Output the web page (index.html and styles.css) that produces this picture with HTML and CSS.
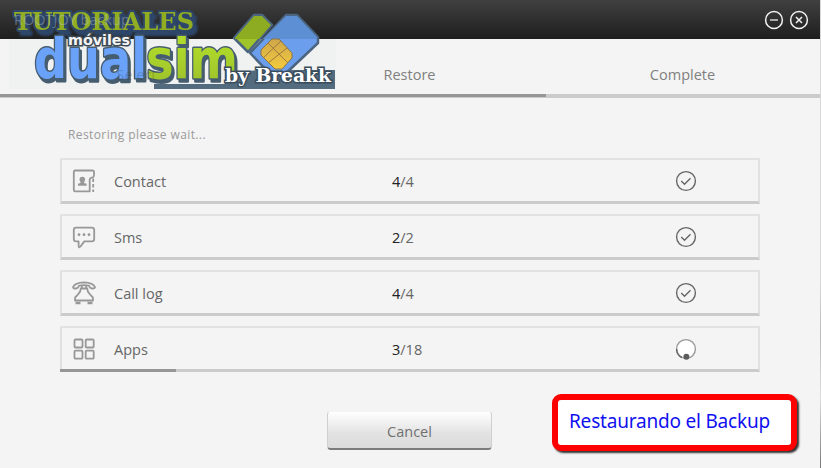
FILE: index.html
```html
<!DOCTYPE html>
<html>
<head>
<meta charset="utf-8">
<title>ROOTJOY backup</title>
<link rel="stylesheet" href="styles.css">
</head>
<body>
<div class="window">
    <div class="titlebar">
        <span class="title">ROOTJOY backup</span>
        <svg class="winbtn" width="20" height="20" viewBox="0 0 20 20">
            <circle cx="10" cy="10" r="8.4"/>
            <path class="dim" d="M6 10h8"/>
        </svg>
        <svg class="winbtn" width="20" height="20" viewBox="0 0 20 20">
            <circle cx="10" cy="10" r="8.4"/>
            <path d="M7 7l6 6M13 7l-6 6"/>
        </svg>
    </div>
    <div class="steps">
        <div class="step">Select</div>
        <div class="step">Restore</div>
        <div class="step">Complete</div>
    </div>
    <div class="stepbar"><div class="stepbar-done"></div></div>

    <div class="content">
        <p class="status">Restoring please wait...</p>
        <div class="item">
            <svg class="icon" width="24" height="24" viewBox="0 0 24 24">
                <path d="M20.5 1.5H3.2Q1.8 1.5 1.8 3V20.5Q1.8 22.3 3.3 22.3H17.7V10.5Q17.7 9 19.2 8.8L20.7 8.3Q22 7.8 22 6.5V3Q22 1.5 20.5 1.5Z"/>
                <path d="M21.2 9.5v3.5M21.2 15v3.5M21.2 20.5v2.5"/>
                <path class="fill" d="M10.3 7.7a2.8 2.8 0 0 1 2.8 2.8q0 1.5-1 2.5v1l2.5.7v2H6v-2l2.5-.7v-1q-1-1-1-2.5a2.8 2.8 0 0 1 2.8-2.8z"/>
            </svg>
            <span class="name">Contact</span>
            <span class="count"><b>4</b>/4</span>
            <svg class="state" width="22" height="22" viewBox="0 0 22 22"><circle cx="11" cy="11" r="9.4"/><path d="M6.300 11.100l3.200 3.200 6-6"/></svg>
        </div>
        <div class="item">
            <svg class="icon" width="24" height="24" viewBox="0 0 24 24">
                <path d="M4 2.700H19.500Q22.200 2.700 22.200 5V14Q22.200 16.400 19.800 16.400H12.300L8.500 21.500Q6.800 23.300 6.600 21V16.400H4.200Q1.800 16.400 1.800 14V5Q1.800 2.700 4 2.700Z"/>
                <path class="dots" d="M7 9.700h.01M12 9.700h.01M17 9.700h.01"/>
            </svg>
            <span class="name">Sms</span>
            <span class="count"><b>2</b>/2</span>
            <svg class="state" width="22" height="22" viewBox="0 0 22 22"><circle cx="11" cy="11" r="9.4"/><path d="M6.300 11.100l3.200 3.200 6-6"/></svg>
        </div>
        <div class="item">
            <svg class="icon" width="24" height="24" viewBox="0 0 24 24">
                <path d="M1 6Q3 1.500 12 1.300Q21 1.500 23 6Q23 7.500 20.500 7.500Q18 7.500 17 4.700Q12 3.700 7 4.700Q6 7.500 3.500 7.500Q1 7.500 1 6Z"/>
                <path d="M9.800 5V7.500H14.200V5M8.800 7.500H15.200C15.200 11.500 17 12.500 19 14.500Q21 16 21 17.500V19.500H3V17.500Q3 16 5 14.500C7 12.500 8.800 11.500 8.800 7.500Z"/>
                <path class="feet" d="M3.500 22H8.500M15.500 22H20.500"/>
            </svg>
            <span class="name">Call log</span>
            <span class="count"><b>4</b>/4</span>
            <svg class="state" width="22" height="22" viewBox="0 0 22 22"><circle cx="11" cy="11" r="9.4"/><path d="M6.300 11.100l3.200 3.200 6-6"/></svg>
        </div>
        <div class="item">
            <svg class="icon" width="24" height="24" viewBox="0 0 24 24">
                <rect x="2.500" y="2.500" width="8" height="8" rx="1"/><rect x="13.700" y="2.500" width="8" height="8" rx="1"/>
                <rect x="2.500" y="13.700" width="8" height="8" rx="1"/><rect x="13.700" y="13.700" width="8" height="8" rx="1"/>
            </svg>
            <span class="name">Apps</span>
            <span class="count"><b>3</b>/18</span>
            <svg class="state busy" width="22" height="22" viewBox="0 0 22 22"><circle cx="11" cy="11" r="9.4"/><path d="M1.600 11A9.400 9.400 0 0 0 7 19.500"/><circle class="knob" cx="11.400" cy="18.700" r="3"/></svg>
            <div class="item-done" style="width:116px"></div>
        </div>
        <button class="cancel">Cancel</button>
    </div>

    <svg class="watermark" width="340" height="92" viewBox="0 0 340 92">
        <defs>
            <linearGradient id="green" x1="0" y1="0" x2="0" y2="1">
                <stop offset="0.3" stop-color="#afd92b"/><stop offset="1" stop-color="#9abd2c"/>
            </linearGradient>
            <linearGradient id="gold" x1="0" y1="0" x2="0" y2="1">
                <stop offset="0" stop-color="#cfa64a"/><stop offset="1" stop-color="#f3cb3d"/>
            </linearGradient>
        </defs>
        <rect class="paper" x="9" y="39" width="327" height="50"/>
        <path class="base" d="M154 89V84H225V72H240L258 70H335V89Z"/>
        <text class="head" x="14" y="30" textLength="180" lengthAdjust="spacingAndGlyphs">TUTORIALES</text>
        <text class="big blue" x="34" y="78" textLength="113" lengthAdjust="spacingAndGlyphs">dual</text>
        <text class="big green" x="146" y="78" textLength="92" lengthAdjust="spacingAndGlyphs">sim</text>
        <text class="mov" x="68" y="45" textLength="62" lengthAdjust="spacingAndGlyphs">móviles</text>
        <!-- cards and chip -->
        <path class="card card-green" d="M254 15H262L272 25L248 52L234 38Z"/>
        <path class="card card-blue" d="M286 15H297L318 37V43L282 77H273L250 53Z"/>
        <path class="card-top" d="M286 16H297L317 37V39H263Z"/>
        <path class="card-topg" d="M254 16H262L271 25L259 39H235V38Z"/>
        <path class="chip" d="M272 39H279L292 53V58L282 69H275L261 55V50Z"/>
        <path class="chip-line" d="M268 43L288 63M281 41L263 58M287 48L268 63"/>
        <text class="by" x="225" y="82" textLength="106" lengthAdjust="spacingAndGlyphs">by Breakk</text>
    </svg>
    <div class="note">Restaurando el Backup</div>
</div>
<div class="edge"></div>
</body>
</html>
```
FILE: styles.css
```css
body {
    margin: 0;
    height: 468px;
    display: flex;
    overflow: hidden;
    background-color: #f4f4f4;
    font-family: "Open Sans", "Noto Sans", sans-serif;
    color: #666;
}
.window {
    width: 820px;
    height: 468px;
    position: relative;
}
.edge {
    width: 1px;
    background: linear-gradient(#d8d8d8 60%, #bbb 72%, #ddd 85%, #777);
}
.titlebar {
    height: 39px;
    box-sizing: border-box;
    padding: 0 11px 0 14px;
    display: flex;
    align-items: center;
    gap: 5px;
    background: linear-gradient(#404040, #1e1e1e);
}
.title {
    margin-right: auto;
    font-size: 14.5px;
    color: rgba(184, 200, 208, 0.4);
    position: relative;
    z-index: 1;
}
.winbtn {
    fill: none;
    stroke: #f2f2f2;
    stroke-width: 1.5;
}
.winbtn .dim {
    stroke: #aaa;
    stroke-width: 2;
}
.steps {
    height: 55px;
    display: flex;
}
.step {
    width: 273px;
    padding-top: 16px;
    line-height: 39px;
    height: 39px;
    text-align: center;
    font-size: 14.5px;
    color: #808080;
}
.step:first-child {
    color: rgba(40, 40, 40, 0.22);
    position: relative;
    z-index: 1;
}
.stepbar {
    height: 4px;
    background-color: #cbcbcb;
}
.stepbar-done {
    width: 546px;
    height: 3px;
    background-color: #969696;
}
.content {
    padding: 26px 60px 0 60px;
    display: flex;
    flex-direction: column;
}
.status {
    margin: 0 0 12px 8px;
    font-size: 12px;
    letter-spacing: 0.4px;
    line-height: 22px;
    color: #9a9a9a;
}
.item {
    height: 46px;
    margin-bottom: 10px;
    box-sizing: border-box;
    border: 2px solid #e1e1e1;
    border-bottom: 3px solid #cbcbcb;
    border-radius: 2px 2px 0 0;
    padding-left: 10px;
    display: flex;
    align-items: center;
    position: relative;
    font-size: 14.5px;
}
.icon {
    fill: none;
    stroke: #989898;
    stroke-width: 1.8;
    stroke-linejoin: round;
}
.icon .fill {
    fill: #989898;
    stroke: none;
}
.icon .dots {
    stroke-width: 2.8;
    stroke-linecap: round;
}
.icon .feet {
    stroke-width: 2.4;
}
.name {
    width: 278px;
    margin-left: 18px;
    padding-top: 2px;
}
.count {
    width: 283px;
    padding-top: 2px;
}
.count b {
    font-weight: normal;
    color: #222;
}
.state {
    fill: none;
    stroke: #666;
    stroke-width: 1.4;
}
.busy {
    fill: #fff;
    stroke: #999;
}
.busy path {
    fill: none;
    stroke: #666;
}
.busy .knob {
    fill: #5c5c5c;
    stroke: none;
}
.item-done {
    position: absolute;
    left: -2px;
    bottom: -3px;
    height: 3px;
    background-color: #969696;
}
.cancel {
    width: 165px;
    height: 39px;
    margin: 29px 0 0 267px;
    padding: 2px 0 0;
    border: 1px solid #cfcfcf;
    border-top-color: #f4f4f4;
    border-bottom: 2px solid #7c7c7c;
    border-radius: 4px;
    background: linear-gradient(#fff, #e2e2e2 60%, #dcdcdc);
    font-family: inherit;
    font-size: 14.5px;
    color: #707070;
}
.note {
    position: absolute;
    left: 552px;
    top: 394px;
    width: 245px;
    height: 57px;
    box-sizing: border-box;
    padding-left: 11px;
    border: 6px solid #f00;
    border-radius: 9px;
    background-color: #fff;
    box-shadow: 2px 2px 2px #333;
    font-family: "Noto Sans", sans-serif;
    font-size: 19px;
    letter-spacing: -0.2px;
    line-height: 43px;
    color: #1010f0;
    white-space: nowrap;
}
.watermark {
    position: absolute;
    left: 0;
    top: 0;
}
.paper {
    fill: #f0f1f1;
}
.base {
    fill: #536b7e;
}
.big {
    font-family: "DejaVu Sans", sans-serif;
    font-weight: bold;
    font-size: 55px;
    stroke: #465d70;
    stroke-width: 3;
    stroke-linejoin: round;
    paint-order: stroke;
    filter: drop-shadow(2px 3px 0 #465d70);
}
.blue {
    fill: #6aa2fa;
}
.green {
    fill: url(#green);
}
.head {
    font-family: "DejaVu Serif", serif;
    font-weight: bold;
    font-size: 24px;
    fill: #91ae23;
    stroke: #2d466a;
    stroke-width: 4;
    stroke-linejoin: round;
    paint-order: stroke;
    filter: drop-shadow(3px 4px 1px #2d466a);
}
.mov {
    font-family: "DejaVu Sans", sans-serif;
    font-weight: bold;
    font-size: 14px;
    fill: #f5f5f5;
    stroke: #3d4a55;
    stroke-width: 3;
    paint-order: stroke;
}
.card {
    stroke: #4b6581;
    stroke-width: 2.5;
    stroke-linejoin: round;
}
.card-green {
    fill: #a0c52a;
}
.card-blue {
    fill: #6b9fed;
}
.card-top {
    fill: #5c8fd3;
}
.card-topg {
    fill: #8dac22;
}
.chip {
    fill: url(#gold);
    stroke: #8d7445;
}
.chip-line {
    fill: none;
    stroke: #9b7940;
}
.by {
    font-family: "DejaVu Serif", serif;
    font-weight: bold;
    font-size: 18px;
    fill: #fff;
    stroke: #3a4d5d;
    stroke-width: 3;
    paint-order: stroke;
}
```
